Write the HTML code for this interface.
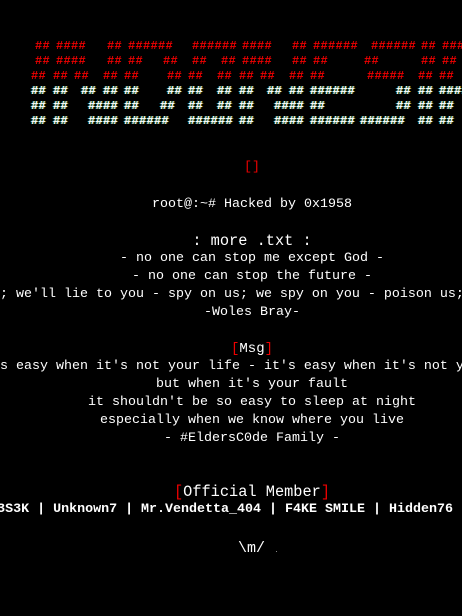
<!DOCTYPE html>
<html><head><meta charset="utf-8"><style>
html,body{margin:0;padding:0;background:#000;width:462px;height:616px;overflow:hidden;position:relative}
.a{position:absolute;font:bold 12px/15px "Liberation Mono",monospace;white-space:pre;letter-spacing:0.3px}
.r{color:#e00}
.w{color:#fff;text-shadow:-1px 0 rgba(0,200,255,.6),1px 0 rgba(255,200,0,.6)}
.t{position:absolute;font:13.33px/18px "Liberation Mono",monospace;color:#fff;white-space:pre}
.c{left:252px;transform:translateX(-50%)}
.red{color:#e00}
</style></head><body>
<div class="a r" style="top:39px;left:35px">##</div><div class="a r" style="top:39px;left:56px">####</div><div class="a r" style="top:39px;left:107px">##</div><div class="a r" style="top:39px;left:128px">######</div><div class="a r" style="top:39px;left:192px">######</div><div class="a r" style="top:39px;left:242px">####</div><div class="a r" style="top:39px;left:292px">##</div><div class="a r" style="top:39px;left:313px">######</div><div class="a r" style="top:39px;left:371px">######</div><div class="a r" style="top:39px;left:421px">##</div><div class="a r" style="top:39px;left:442px">###</div>
<div class="a r" style="top:54px;left:35px">##</div><div class="a r" style="top:54px;left:56px">####</div><div class="a r" style="top:54px;left:107px">##</div><div class="a r" style="top:54px;left:128px">##</div><div class="a r" style="top:54px;left:163px">##</div><div class="a r" style="top:54px;left:192px">##</div><div class="a r" style="top:54px;left:221px">##</div><div class="a r" style="top:54px;left:242px">####</div><div class="a r" style="top:54px;left:292px">##</div><div class="a r" style="top:54px;left:313px">##</div><div class="a r" style="top:54px;left:364px">##</div><div class="a r" style="top:54px;left:421px">##</div><div class="a r" style="top:54px;left:442px">##</div>
<div class="a r" style="top:69px;left:31px">##</div><div class="a r" style="top:69px;left:53px">##</div><div class="a r" style="top:69px;left:74px">##</div><div class="a r" style="top:69px;left:103px">##</div><div class="a r" style="top:69px;left:124px">##</div><div class="a r" style="top:69px;left:167px">##</div><div class="a r" style="top:69px;left:188px">##</div><div class="a r" style="top:69px;left:217px">##</div><div class="a r" style="top:69px;left:239px">##</div><div class="a r" style="top:69px;left:260px">##</div><div class="a r" style="top:69px;left:289px">##</div><div class="a r" style="top:69px;left:310px">##</div><div class="a r" style="top:69px;left:367px">#####</div><div class="a r" style="top:69px;left:418px">##</div><div class="a r" style="top:69px;left:439px">##</div>
<div class="a w" style="top:84px;left:31px">##</div><div class="a w" style="top:84px;left:53px">##</div><div class="a w" style="top:84px;left:81px">##</div><div class="a w" style="top:84px;left:103px">##</div><div class="a w" style="top:84px;left:124px">##</div><div class="a w" style="top:84px;left:167px">##</div><div class="a w" style="top:84px;left:188px">##</div><div class="a w" style="top:84px;left:217px">##</div><div class="a w" style="top:84px;left:239px">##</div><div class="a w" style="top:84px;left:267px">##</div><div class="a w" style="top:84px;left:289px">##</div><div class="a w" style="top:84px;left:310px">######</div><div class="a w" style="top:84px;left:396px">##</div><div class="a w" style="top:84px;left:418px">##</div><div class="a w" style="top:84px;left:439px">####</div>
<div class="a w" style="top:99px;left:31px">##</div><div class="a w" style="top:99px;left:53px">##</div><div class="a w" style="top:99px;left:88px">####</div><div class="a w" style="top:99px;left:124px">##</div><div class="a w" style="top:99px;left:160px">##</div><div class="a w" style="top:99px;left:188px">##</div><div class="a w" style="top:99px;left:217px">##</div><div class="a w" style="top:99px;left:239px">##</div><div class="a w" style="top:99px;left:274px">####</div><div class="a w" style="top:99px;left:310px">##</div><div class="a w" style="top:99px;left:396px">##</div><div class="a w" style="top:99px;left:418px">##</div><div class="a w" style="top:99px;left:439px">##</div>
<div class="a w" style="top:114px;left:31px">##</div><div class="a w" style="top:114px;left:53px">##</div><div class="a w" style="top:114px;left:88px">####</div><div class="a w" style="top:114px;left:124px">######</div><div class="a w" style="top:114px;left:188px">######</div><div class="a w" style="top:114px;left:239px">##</div><div class="a w" style="top:114px;left:274px">####</div><div class="a w" style="top:114px;left:310px">######</div><div class="a w" style="top:114px;left:360px">######</div><div class="a w" style="top:114px;left:418px">##</div><div class="a w" style="top:114px;left:439px">##</div>

<div class="t c red" style="top:159px">[]</div>
<div class="t c" style="top:196px">root@:~# Hacked by 0x1958</div>
<div class="t c" style="top:231px;font-size:15.3px;line-height:20px">: more .txt :</div>
<div class="t c" style="top:250px">- no one can stop me except God -</div>
<div class="t c" style="top:268px">- no one can stop the future -</div>
<div class="t" style="top:286px;left:0px">; we'll lie to you - spy on us; we spy on you - poison us;</div>
<div class="t c" style="top:304px">-Woles Bray-</div>
<div class="t c" style="top:339px;font-size:14px;line-height:20px"><span class="red">[</span>Msg<span class="red">]</span></div>
<div class="t" style="top:358px;left:0px">s easy when it's not your life - it's easy when it's not y</div>
<div class="t c" style="top:376px">but when it's your fault</div>
<div class="t c" style="top:394px">it shouldn't be so easy to sleep at night</div>
<div class="t c" style="top:412px">especially when we know where you live</div>
<div class="t c" style="top:430px">- #EldersC0de Family -</div>
<div class="t c" style="top:482px;font-size:15.3px;line-height:20px"><span class="red">[</span>Official Member<span class="red">]</span></div>
<div class="t" style="top:501px;right:9px;font-weight:bold">B3S3K | Unknown7 | Mr.Vendetta_404 | F4KE SMILE | Hidden76</div>
<div class="t" style="top:539px;left:238px;font-size:15px;line-height:20px">\m/</div>
<div style="position:absolute;top:551px;left:276px;width:1px;height:1px;background:#888"></div>
</body></html>
